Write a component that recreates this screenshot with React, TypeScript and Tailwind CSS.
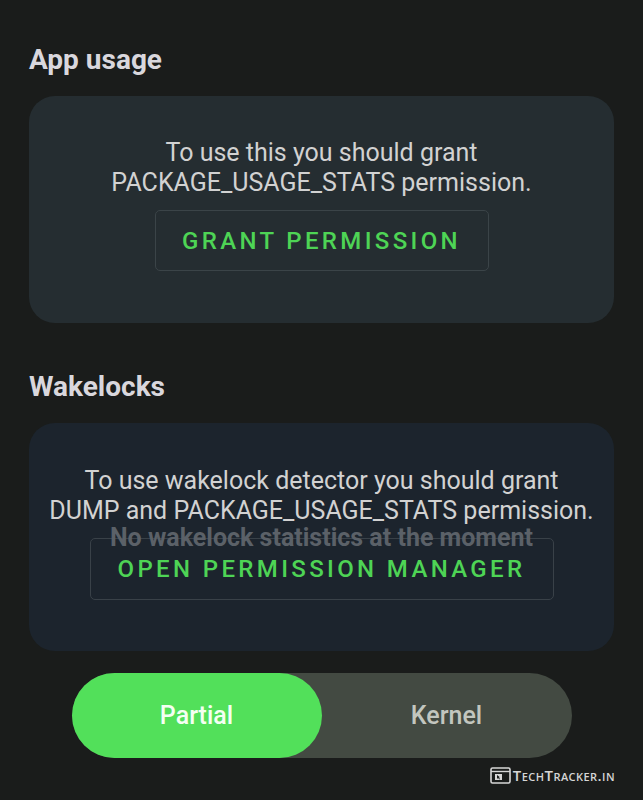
export default function App() {
  return (
    <div
      className="w-[643px] h-[800px] bg-[#1a1c1b] overflow-hidden flex flex-col"
      style={{ fontFamily: 'Roboto, "Liberation Sans", sans-serif' }}
    >
      <div className="px-[29px] pt-[44px]">
        <h2 className="text-[28px] leading-[32px] font-bold text-[#d9d7dd]">App usage</h2>
        <div className="mt-[20px] h-[227px] rounded-[26px] bg-[#252d31] flex flex-col items-center pt-[42px]">
          <p className="text-[25px] leading-[30px] text-[#d2d2d2] text-center">
            To use this you should grant
            <br />
            PACKAGE_USAGE_STATS permission.
          </p>
          <button className="mt-[12px] w-[334px] h-[61px] rounded-[5px] border border-[#3b4448] text-[24px] font-medium tracking-[0.14em] text-[#4ed455]">
            GRANT PERMISSION
          </button>
        </div>

        <h2 className="mt-[48px] text-[28px] leading-[32px] font-bold text-[#d9d7dd]">Wakelocks</h2>
        <div className="mt-[20px] h-[228px] rounded-[26px] bg-[#1c242d] flex flex-col items-center pt-[43px]">
          <p className="text-[25px] leading-[30px] text-[#d2d2d2] text-center">
            To use wakelock detector you should grant
            <br />
            DUMP and PACKAGE_USAGE_STATS permission.
          </p>
          <div className="relative mt-[12px]">
            <button className="w-[464px] h-[62px] rounded-[5px] border border-[#394148] text-[24px] font-medium tracking-[0.14em] text-[#4ed455]">
              OPEN PERMISSION MANAGER
            </button>
            <span className="absolute left-[-40px] right-[-40px] top-[-15px] text-center text-[25px] leading-[30px] font-bold text-[#5b6168]">
              No wakelock statistics at the moment
            </span>
          </div>
        </div>
      </div>

      <div className="mt-[22px] mx-auto w-[500px] h-[85px] rounded-full bg-[#434a42] flex">
        <div className="w-[250px] h-full rounded-full bg-[#52e05a] flex items-center justify-center text-[25px] font-medium text-[#f4fff2]">
          Partial
        </div>
        <div className="flex-1 flex items-center justify-center text-[25px] font-medium text-[#c2c6bf]">
          Kernel
        </div>
      </div>

      <div className="mt-[6px] self-end mr-[28px] flex items-center gap-[2px] text-[#d6d6d6]">
        <svg width="21" height="17" viewBox="0 0 21 17" fill="none">
          <rect x="1" y="1" width="19" height="15" rx="1.5" stroke="#d6d6d6" strokeWidth="1.6" />
          <line x1="1" y1="4.5" x2="20" y2="4.5" stroke="#d6d6d6" strokeWidth="1.4" />
          <rect x="5" y="7" width="7" height="6" fill="#d6d6d6" />
          <path d="M7 8 L7 12 L8 11 L9.5 12.5 L10 12 L8.8 10.6 L10 10.2 Z" fill="#1a1c1b" />
        </svg>
        <span className="text-[15px] font-semibold tracking-[0.03em] [font-variant:small-caps]" style={{ fontFamily: '"Open Sans", sans-serif' }}>
          TechTracker.in
        </span>
      </div>
    </div>
  );
}
